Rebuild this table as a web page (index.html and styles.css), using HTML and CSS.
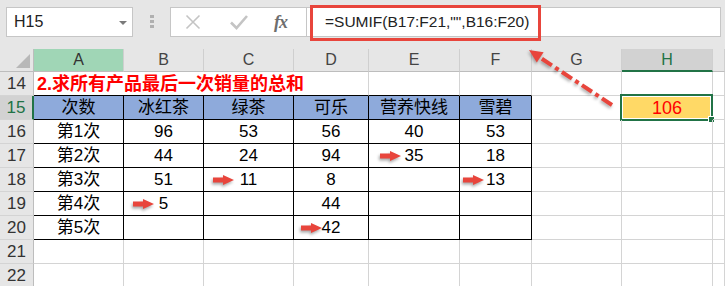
FILE: index.html
```html
<!DOCTYPE html>
<html lang="zh-CN">
<head>
<meta charset="utf-8">
<title>SUMIF</title>
<link rel="stylesheet" href="styles.css">
</head>
<body>
<div class="app">
  <div class="toolbar">
    <div class="namebox"><span>H15</span><i class="caret"></i></div>
    <div class="grip"><i></i><i></i><i></i></div>
    <div class="fxbox">
      <svg class="ico-x" width="16" height="16" viewBox="0 0 16 16"><path d="M1.5 1.5l13 13M14.5 1.5l-13 13" stroke="#c4c4c4" stroke-width="1.6" fill="none"/></svg>
      <svg class="ico-ok" width="18" height="16" viewBox="0 0 18 16"><path d="M1 8.5l5.5 5.5L17 2" stroke="#c4c4c4" stroke-width="2.6" fill="none"/></svg>
      <span class="fx">fx</span>
    </div>
    <div class="formula">=SUMIF(B17:F21,"",B16:F20)</div>
  </div>

  <div class="sheet">
    <!-- column headers -->
    <div class="ch corner"><i class="tri"></i></div>
    <div class="ch sel-a">A</div>
    <div class="ch">B</div>
    <div class="ch">C</div>
    <div class="ch">D</div>
    <div class="ch">E</div>
    <div class="ch">F</div>
    <div class="ch">G</div>
    <div class="ch sel-h">H</div>
    <div class="ch"></div>

    <!-- row 14 -->
    <div class="rh">14</div>
    <div class="c title tb">2.求所有产品最后一次销量的总和</div>
    <div class="c tb"></div>
    <div class="c tb"></div>
    <div class="c"></div>
    <div class="c"></div>
    <div class="c"></div>

    <!-- row 15 -->
    <div class="rh sel-r">15</div>
    <div class="c t th">次数</div>
    <div class="c t th">冰红茶</div>
    <div class="c t th">绿茶</div>
    <div class="c t th">可乐</div>
    <div class="c t th">营养快线</div>
    <div class="c t th">雪碧</div>
    <div class="c"></div>
    <div class="c result">106<span class="selbox"><i class="handle"></i></span></div>
    <div class="c"></div>

    <!-- row 16 -->
    <div class="rh">16</div>
    <div class="c t">第1次</div>
    <div class="c t">96</div>
    <div class="c t">53</div>
    <div class="c t">56</div>
    <div class="c t">40</div>
    <div class="c t">53</div>
    <div class="c"></div>
    <div class="c"></div>
    <div class="c"></div>

    <!-- row 17 -->
    <div class="rh">17</div>
    <div class="c t">第2次</div>
    <div class="c t">44</div>
    <div class="c t">24</div>
    <div class="c t">94</div>
    <div class="c t"><svg class="arr a-e" width="22" height="14" viewBox="0 0 22 14"><path d="M0 4.5H10V2L21 7L10 12V9.5H0Z"/></svg>35</div>
    <div class="c t">18</div>
    <div class="c"></div>
    <div class="c"></div>
    <div class="c"></div>

    <!-- row 18 -->
    <div class="rh">18</div>
    <div class="c t">第3次</div>
    <div class="c t">51</div>
    <div class="c t"><svg class="arr a-c" width="22" height="14" viewBox="0 0 22 14"><path d="M0 4.5H10V2L21 7L10 12V9.5H0Z"/></svg>11</div>
    <div class="c t">8</div>
    <div class="c t"></div>
    <div class="c t"><svg class="arr a-f" width="22" height="14" viewBox="0 0 22 14"><path d="M0 4.5H10V2L21 7L10 12V9.5H0Z"/></svg>13</div>
    <div class="c"></div>
    <div class="c"></div>
    <div class="c"></div>

    <!-- row 19 -->
    <div class="rh">19</div>
    <div class="c t">第4次</div>
    <div class="c t"><svg class="arr a-b" width="22" height="14" viewBox="0 0 22 14"><path d="M0 4.5H10V2L21 7L10 12V9.5H0Z"/></svg>5</div>
    <div class="c t"></div>
    <div class="c t">44</div>
    <div class="c t"></div>
    <div class="c t"></div>
    <div class="c"></div>
    <div class="c"></div>
    <div class="c"></div>

    <!-- row 20 -->
    <div class="rh">20</div>
    <div class="c t">第5次</div>
    <div class="c t"></div>
    <div class="c t"></div>
    <div class="c t"><svg class="arr a-d" width="22" height="14" viewBox="0 0 22 14"><path d="M0 4.5H10V2L21 7L10 12V9.5H0Z"/></svg>42</div>
    <div class="c t"></div>
    <div class="c t"></div>
    <div class="c"></div>
    <div class="c"></div>
    <div class="c"></div>

    <!-- row 21 -->
    <div class="rh">21</div>
    <div class="c"></div><div class="c"></div><div class="c"></div><div class="c"></div>
    <div class="c"></div><div class="c"></div><div class="c"></div><div class="c"></div><div class="c"></div>

    <!-- row 22 -->
    <div class="rh">22</div>
    <div class="c"></div><div class="c"></div><div class="c"></div><div class="c"></div>
    <div class="c"></div><div class="c"></div><div class="c"></div><div class="c"></div><div class="c"></div>
  </div>

  <div class="callout"></div>
  <svg class="pointer" width="725" height="286" viewBox="0 0 725 286">
    <line x1="612" y1="105" x2="540" y2="57.5" stroke="#e8453c" stroke-width="4" stroke-dasharray="12 4 4 4"/>
    <path d="M529 50L543.6 52.2L536.8 62.4Z" fill="#e8453c"/>
  </svg>
</div>
</body>
</html>
```

FILE: styles.css
```css
body {
  margin: 0;
  background: #ffffff;
  font-family: "Liberation Sans", "Noto Sans CJK SC", sans-serif;
}

.app {
  position: relative;
  width: 725px;
  height: 286px;
  overflow: hidden;
  background: #ffffff;
}

/* ---------- formula bar ---------- */
.toolbar {
  height: 49px;
  box-sizing: border-box;
  background: #e6e6e6;
  display: flex;
  align-items: flex-start;
  padding: 7px 4px 0 6px;
}

.namebox {
  width: 127px;
  height: 30px;
  box-sizing: border-box;
  background: #ffffff;
  border: 1px solid #c6c6c6;
  display: flex;
  align-items: center;
  justify-content: space-between;
  padding: 0 5px 0 7px;
  font-size: 16px;
  color: #222222;
}

.caret {
  width: 0;
  height: 0;
  border-left: 4px solid transparent;
  border-right: 4px solid transparent;
  border-top: 4px solid #7a7a7a;
  margin-top: 1px;
}

.grip {
  width: 37px;
  height: 30px;
  box-sizing: border-box;
  display: flex;
  flex-direction: column;
  align-items: center;
  gap: 2px;
  padding-top: 8px;
}

.grip i {
  width: 4px;
  height: 3px;
  background: #b0b0b0;
}

.fxbox {
  width: 137px;
  height: 30px;
  box-sizing: border-box;
  background: #ffffff;
  border: 1px solid #c6c6c6;
  display: flex;
  align-items: center;
  padding-left: 14px;
}

.ico-ok {
  margin-left: 29px;
}

.fx {
  margin-left: 26px;
  font-family: "Liberation Serif", serif;
  font-style: italic;
  font-weight: bold;
  font-size: 18px;
  color: #6e6e6e;
  letter-spacing: -1px;
}

.formula {
  flex: 1;
  height: 30px;
  box-sizing: border-box;
  background: #ffffff;
  border: 1px solid #c6c6c6;
  border-left: none;
  display: flex;
  align-items: center;
  padding-left: 18px;
  font-size: 15.5px;
  color: #222222;
}

/* ---------- sheet ---------- */
.sheet {
  display: grid;
  grid-template-columns: 34px 90px 80px 90px 75px 91px 72px 90px 91px 1fr;
  grid-template-rows: 23px repeat(9, 24px);
}

.sheet > div {
  box-sizing: border-box;
  display: flex;
  align-items: center;
  justify-content: center;
  line-height: 1;
  position: relative;
}

.ch {
  background: #e6e6e6;
  border-right: 1px solid #cfcfcf;
  border-bottom: 1px solid #bdbdbd;
  font-size: 16px;
  color: #444444;
}

.corner {
  justify-content: flex-end !important;
  align-items: flex-end !important;
  padding: 0 3px 3px 0;
  border-right: 1px solid #bdbdbd;
}

.tri {
  width: 14px;
  height: 14px;
  background: #b8b8b8;
  clip-path: polygon(100% 0, 100% 100%, 0 100%);
}

.sel-a {
  background: #a0d6b6;
  color: #333333;
}

.sel-h {
  background: #d2d2d2;
  color: #217346;
  border-bottom: 2px solid #217346;
}

.rh {
  background: #e6e6e6;
  border-right: 1px solid #bdbdbd;
  border-bottom: 1px solid #d4d4d4;
  font-size: 17px;
  color: #333333;
}

.sel-r {
  background: #d2d2d2;
  color: #217346;
  border-right: 2px solid #217346;
}

.c {
  border-right: 1px solid #d4d4d4;
  border-bottom: 1px solid #d4d4d4;
  font-size: 17px;
  color: #000000;
}

.title {
  grid-column: span 4;
  justify-content: flex-start !important;
  padding-left: 3px;
  font-size: 18px;
  font-weight: bold;
  color: #ff0000;
  white-space: nowrap;
}

.tb {
  border-bottom-color: #000000;
}

.t {
  border-right-color: #000000;
  border-bottom-color: #000000;
}

.th {
  background: #8eaadb;
}

.result {
  background: #ffd966;
  color: #ff0000;
  font-size: 18px;
}

.selbox {
  position: absolute;
  left: -2px;
  top: -2px;
  width: 93px;
  height: 27px;
  box-sizing: border-box;
  border: 2px solid #217346;
  box-shadow: inset 0 0 0 1px #ffffff;
}

.handle {
  position: absolute;
  right: -4px;
  bottom: -4px;
  width: 5px;
  height: 5px;
  background: #217346;
  border: 1px solid #ffffff;
}

/* small red pointer arrows */
.arr {
  position: absolute;
  top: 50%;
  margin-top: -7px;
  fill: #e8453c;
  filter: drop-shadow(-1px 2px 1.5px rgba(0, 0, 0, 0.35));
}

.a-b { left: 9px; }
.a-c { left: 9px; }
.a-d { left: 7px; }
.a-e { left: 11px; }
.a-f { left: 3px; }

/* callout around the formula */
.callout {
  position: absolute;
  left: 310px;
  top: 5px;
  width: 231px;
  height: 36px;
  box-sizing: border-box;
  border: 3px solid #e8453c;
}

.pointer {
  position: absolute;
  left: 0;
  top: 0;
  pointer-events: none;
  filter: drop-shadow(-1px 2px 1.5px rgba(0, 0, 0, 0.3));
}
```
